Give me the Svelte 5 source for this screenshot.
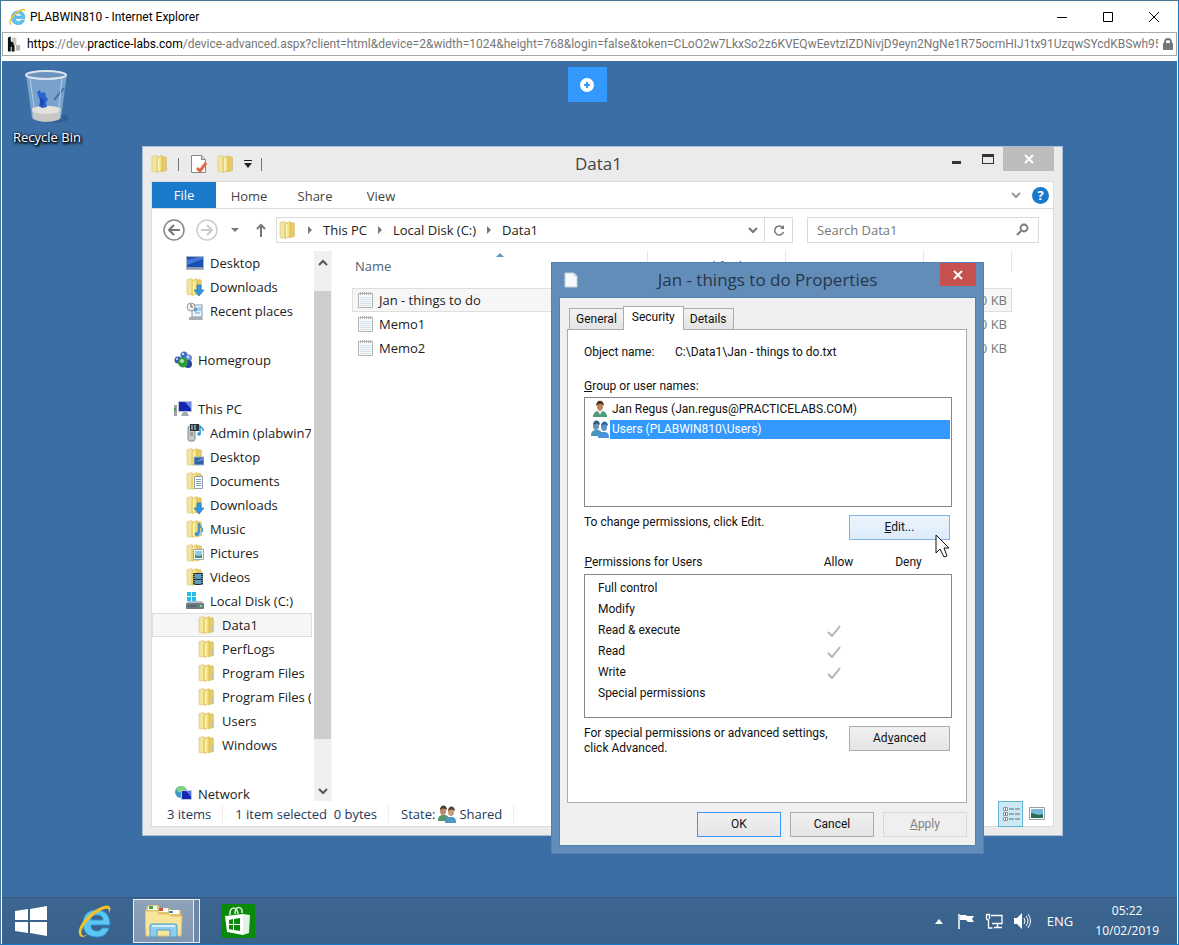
<script lang="ts">
	type NavItem = { icon: string; label: string; level: number };

	const navGroups: NavItem[][] = [
		[
			{ icon: 'desktop', label: 'Desktop', level: 1 },
			{ icon: 'downloads', label: 'Downloads', level: 1 },
			{ icon: 'recent', label: 'Recent places', level: 1 }
		],
		[{ icon: 'homegroup', label: 'Homegroup', level: 0 }],
		[
			{ icon: 'pc', label: 'This PC', level: 0 },
			{ icon: 'media', label: 'Admin (plabwin7)', level: 1 },
			{ icon: 'folder-desktop', label: 'Desktop', level: 1 },
			{ icon: 'documents', label: 'Documents', level: 1 },
			{ icon: 'downloads', label: 'Downloads', level: 1 },
			{ icon: 'music', label: 'Music', level: 1 },
			{ icon: 'pictures', label: 'Pictures', level: 1 },
			{ icon: 'videos', label: 'Videos', level: 1 },
			{ icon: 'disk', label: 'Local Disk (C:)', level: 1 },
			{ icon: 'folder', label: 'Data1', level: 2 },
			{ icon: 'folder', label: 'PerfLogs', level: 2 },
			{ icon: 'folder', label: 'Program Files', level: 2 },
			{ icon: 'folder', label: 'Program Files (x86)', level: 2 },
			{ icon: 'folder', label: 'Users', level: 2 },
			{ icon: 'folder', label: 'Windows', level: 2 }
		],
		[{ icon: 'network', label: 'Network', level: 0 }]
	];

	const crumbs = ['This PC', 'Local Disk (C:)', 'Data1'];
	const files = ['Jan - things to do', 'Memo1', 'Memo2'];

	const principals = [
		{ icon: 'user', label: 'Jan Regus (Jan.regus@PRACTICELABS.COM)' },
		{ icon: 'users', label: 'Users (PLABWIN810\\Users)' }
	];

	const permissions = [
		{ name: 'Full control', allow: false },
		{ name: 'Modify', allow: false },
		{ name: 'Read & execute', allow: true },
		{ name: 'Read', allow: true },
		{ name: 'Write', allow: true },
		{ name: 'Special permissions', allow: false }
	];

	let currentFolder = $state('Data1');
	let selectedFile = $state(0);
	let selectedPrincipal = $state(1);
	let query = $state('');
</script>

{#snippet folderBase()}
	<path d="M1 1.500l5-1 1 1v15l-5 .5-1-1z" fill="#f3e4a0" stroke="#dcc573" stroke-width=".6" />
	<path d="M10 2l4-.5 1.500 1v13l-5 1.500z" fill="#e6cb68" stroke="#d4b655" stroke-width=".5" />
	<path d="M6 3l5-2.500v15L6 17.500z" fill="#f4e07f" stroke="#cfb24e" stroke-width=".6" />
	<path d="M7 3.500l1.500-.8v13L7 16.500z" fill="#fbf3bf" />
	<path d="M14 10h1.500v5H14z" fill="#b9c7c4" />
{/snippet}

{#snippet icon(name: string)}
	<svg class="icon" viewBox="0 0 18 18" aria-hidden="true">
		{#if name === 'folder'}
			{@render folderBase()}
		{:else if name === 'desktop'}
			<rect x="0" y="2" width="18" height="14" fill="#aeb9c8" />
			<rect x="1" y="3" width="16" height="10" fill="#1c4fb4" />
			<path d="M1 11V6l11-3h5v2z" fill="#4378d6" />
			<path d="M1 14h16" stroke="#6c7c90" />
		{:else if name === 'downloads'}
			{@render folderBase()}
			<path d="M11 7h4v5h3l-5 6-5-6h3z" fill="#2f9ae0" stroke="#1769a8" stroke-width=".6" />
		{:else if name === 'recent'}
			<rect x="6" y="3" width="10" height="12" fill="#eef4fa" stroke="#8795a5" />
			<path d="M8 6h3v3H8zM12 6h3M12 8h3M9 11h5" fill="#5a9fd8" stroke="#5a9fd8" />
			<path d="M3 15h13l1 3H3z" fill="#a8adb3" />
			<circle cx="5" cy="5" r="4" fill="#eee" stroke="#999" />
			<path d="M5 2v3h2" fill="none" stroke="#666" />
		{:else if name === 'homegroup'}
			<circle cx="4" cy="9" r="3.500" fill="#3558b8" />
			<circle cx="10" cy="4" r="3.500" fill="#3f6cc8" />
			<circle cx="14.500" cy="7" r="3.500" fill="#6b8fdc" />
			<circle cx="14" cy="13" r="4" fill="#27459f" />
			<circle cx="9" cy="11.500" r="5" fill="#2f9a3c" />
			<circle cx="3" cy="8" r="1.200" fill="#b9ccf4" />
			<circle cx="9" cy="3" r="1.200" fill="#cfdcf8" />
			<circle cx="14" cy="6" r="1.200" fill="#dce6fb" />
			<circle cx="8" cy="10" r="2" fill="#b4e6a8" />
		{:else if name === 'pc'}
			<rect x="0" y="5" width="3" height="11" fill="#9aa3a8" />
			<rect x="0" y="8" width="2" height="3" fill="#53a455" />
			<rect x="4" y="1" width="14" height="11" fill="#bcc5d2" />
			<rect x="5" y="2" width="12" height="9" fill="#1426b0" />
			<path d="M11 2h6v7z" fill="#6884e4" />
			<path d="M9 12h4l2 4H7z" fill="#a2a9b1" />
		{:else if name === 'media'}
			<rect x="2" y="2" width="7" height="15" rx="2" fill="#c5cacd" stroke="#7f888d" />
			<path d="M4 9h3M4 11h3" stroke="#6f7578" />
			<rect x="4" y="0" width="9" height="7" fill="#28343c" />
			<path d="M6 1v5M9 1v5" stroke="#d9e9ee" />
			<path d="M14 10V2l3 3v2" fill="none" stroke="#279bd9" stroke-width="1.500" />
			<circle cx="13" cy="10" r="1.800" fill="#279bd9" />
		{:else if name === 'folder-desktop'}
			{@render folderBase()}
			<path d="M8 9h10v8H8z" fill="#2f5fa5" stroke="#a6b9d0" />
			<path d="M9 14l8-4v2z" fill="#77a5dd" />
		{:else if name === 'documents'}
			{@render folderBase()}
			<path d="M8.500 4.500h8v12h-8z" fill="#f9fbfc" stroke="#91a0ac" />
			<path d="M10 7.500h5M10 9.500h5M10 11.500h5M10 13.500h5" stroke="#7fa1bd" />
		{:else if name === 'music'}
			{@render folderBase()}
			<path d="M13 3v10" stroke="#1f7fc4" stroke-width="1.500" />
			<path d="M13 3c0 4 5 4 3 9" fill="none" stroke="#2f9ae0" stroke-width="1.500" />
			<ellipse cx="11" cy="14" rx="2.500" ry="2" fill="#2f9ae0" />
		{:else if name === 'pictures'}
			{@render folderBase()}
			<path d="M7.500 5.500h10v10h-10z" fill="#f7fafc" stroke="#93a8b9" />
			<path d="M9 7h7v7H9z" fill="#8fcbe6" />
			<path d="M9 14v-3l4 1 3-1v3z" fill="#51906c" />
		{:else if name === 'videos'}
			{@render folderBase()}
			<path d="M7 5h10v12H7z" fill="#233445" />
			<path d="M9 6h6v5H9zM9 12h6v4H9z" fill="#5c9fbd" />
			<path d="M8 6v11M16 6v11" stroke="#dbe5ea" stroke-dasharray="1 1" />
		{:else if name === 'disk'}
			<path d="M1 0h4v4H1zM6 0h4v4H6zM1 5h4v4H1zM6 5h4v4H6z" fill="#1fbef0" />
			<path d="M2 9h14l2 3H0z" fill="#b7c1c6" />
			<rect x="0" y="11" width="18" height="6" rx="1" fill="#6c7b84" />
			<path d="M2 14h9" stroke="#44535c" />
			<path d="M14 14h2" stroke="#76dd6d" stroke-width="2" />
		{:else if name === 'network'}
			<circle cx="7" cy="7" r="6" fill="#3e9ccc" />
			<path d="M2 4c3-4 8-4 10 0-3 1-4 4-8 3z" fill="#84cf82" />
			<rect x="7" y="5" width="11" height="10" fill="#c1cad6" />
			<rect x="8" y="6" width="9" height="8" fill="#1426b0" />
			<path d="M12 6h5v6z" fill="#5675dd" />
		{:else if name === 'note'}
			<path d="M1.500 2.500h14v14h-14z" fill="#f7f9fa" stroke="#b0b5b8" />
			<path d="M3 6.500h11M3 8.500h11M3 10.500h11M3 12.500h11M3 14.500h11" stroke="#d3e1ea" />
			<path d="M3.500 1v3M5.500 1v3M7.500 1v3M9.500 1v3M11.500 1v3M13.500 1v3" stroke="#9aa1a6" stroke-width=".7" />
		{:else if name === 'user'}
			<path d="M2 17c0-5 3-6 7-6s7 1 7 6z" fill="#4f9e78" />
			<path d="M7 11l2 4 2-4z" fill="#e9f4ee" />
			<ellipse cx="9" cy="6" rx="3" ry="5" fill="#bd8257" />
			<path d="M5 6c0-7 8-7 8 0-2-3-5-3-8 0z" fill="#4b3826" />
		{:else if name === 'users' || name === 'shared'}
			<path d="M0 16c0-5 2-6 6-6s5 2 5 6z" fill={name === 'users' ? '#4a94ba' : '#55976e'} />
			<path d="M7 18c0-6 2-6 6-6s5 2 5 6z" fill={name === 'users' ? '#4793d8' : '#4c98c2'} />
			<ellipse cx="5" cy="6" rx="3" ry="4" fill={name === 'users' ? '#6795b2' : '#bd8a65'} />
			<ellipse cx="13" cy="7" rx="3" ry="4" fill={name === 'users' ? '#5f93c4' : '#c99b78'} />
			<path d="M2 5c0-6 7-6 7 0-2-2-4-2-7 0z" fill={name === 'users' ? '#285a83' : '#4c3a2a'} />
			<path d="M10 6c0-6 7-6 7 0-2-2-4-2-7 0z" fill={name === 'users' ? '#2b689d' : '#593f2c'} />
		{/if}
	</svg>
{/snippet}

{#snippet ieLogo()}
	<svg class="ie" viewBox="0 0 34 34" aria-hidden="true">
		<path
			d="M32 21H13c0 4 2 6 6 6 3 0 4-1 5-3h7c-2 6-6 9-12 9C10 33 5 28 5 19.500S10 6 18.500 6 32 11 32 21zM25 16c0-3-2-5-6-5s-6 2-6 5z"
			fill="#5cc6f2"
			stroke="#2b93cf"
		/>
		<path
			d="M2 32c-4-5 2-15 10-22C20 3 30-1 32 3c1 2 0 4-1 6 0-3 0-5-4-4-5 1-12 6-17 12-5 5-8 11-6 14 1 1 3 1 6-1-3 3-6 4-8 2z"
			fill="#f2c12e"
		/>
	</svg>
{/snippet}

<div class="browser">
	<header class="browser-title">
		{@render ieLogo()}
		<span>PLABWIN810 - Internet Explorer</span>
		<div class="browser-controls">
			<button type="button" aria-label="Minimize">
				<svg viewBox="0 0 12 12"><path d="M1 6.500h10" /></svg>
			</button>
			<button type="button" aria-label="Maximize">
				<svg viewBox="0 0 12 12"><path d="M1.500 1.500h9v9h-9z" /></svg>
			</button>
			<button type="button" aria-label="Close">
				<svg viewBox="0 0 12 12"><path d="M1 1l10 10M11 1L1 11" /></svg>
			</button>
		</div>
	</header>

	<div class="url-bar">
		<svg class="favicon" viewBox="0 0 16 16" aria-hidden="true">
			<path d="M1 1l3-1v5l4 2v9H5v-5H4v5H1z" fill="#111" />
			<path d="M6 1h4v8H7V6L5 5V2z" fill="#c9c9c9" />
			<path d="M10 9h4v6h-5z" fill="#b5b5b5" />
		</svg>
		<span class="url"
			><b>https</b>://dev.<b>practice-labs.com</b
			>/device-advanced.aspx?client=html&amp;device=2&amp;width=1024&amp;height=768&amp;login=false&amp;token=CLoO2w7LkxSo2z6KVEQwEevtzIZDNivjD9eyn2NgNe1R75ocmHIJ1tx91UzqwSYcdKBSwh95C</span
		>
		<svg class="lock" viewBox="0 0 10 13" aria-hidden="true">
			<path d="M2 6V4c0-4 6-4 6 0v2" fill="none" stroke="#777" stroke-width="2" />
			<rect y="5" width="10" height="7" fill="#777" />
		</svg>
	</div>

	<main class="desktop">
		<div class="recycle">
			<svg viewBox="0 0 44 54" aria-hidden="true">
				<ellipse cx="27" cy="48" rx="17" ry="5" fill="#2d5788" opacity=".6" />
				<path d="M1 4h41l-6 44c-4 5-25 5-29 0z" fill="#8db4da" opacity=".75" />
				<path d="M7 38c6-3 23-3 29 0l-1 10c-4 5-23 5-27 0z" fill="#c9c7c4" />
				<ellipse cx="21" cy="40" rx="14" ry="4" fill="#e4e1dd" />
				<path d="M12 22l3-2 1 3 4-1 1 5 2 2-2 4 1 4-5 1-3-2 1-5z" fill="#2a63cf" />
				<path d="M15 28l3 1 1 5-3 3z" fill="#1745b4" />
				<path d="M29 30l10-12" stroke="#4a74a4" stroke-width="2" />
				<path d="M5 8l5 36M37 8l-4 36" stroke="#c3d9ee" stroke-width="1" opacity=".8" />
				<ellipse cx="21" cy="5" rx="20" ry="4" fill="#6a93be" stroke="#dde6ee" stroke-width="2" />
			</svg>
			<span>Recycle Bin</span>
		</div>

		<button type="button" class="toolbar-handle" aria-label="Open toolbar">
			<svg viewBox="0 0 14 14"><circle cx="7" cy="7" r="7" fill="#fff" /><path d="M7 4v6M4 7h6" stroke="#39f" stroke-width="2" /></svg>
		</button>

		<section class="explorer" aria-label="Data1">
			<header class="explorer-title">
				<div class="quick">
					{@render icon('folder')}
					<i class="bar"></i>
					<svg class="check-page" viewBox="0 0 18 20" aria-hidden="true">
						<path d="M1.500 1.500h10l4 4v13h-14z" fill="#fff" stroke="#888" />
						<path d="M11.500 1.500v4h4" fill="#ccc" stroke="#888" />
						<path d="M7 14l3 3 6-8" fill="none" stroke="#e0694a" stroke-width="3" />
					</svg>
					{@render icon('folder')}
					<svg class="customize" viewBox="0 0 8 8" aria-hidden="true"><path d="M0 0h8v1H0zM0 3h8L4 8z" fill="#222" /></svg>
					<i class="bar"></i>
				</div>
				<h1>Data1</h1>
				<div class="explorer-controls">
					<button type="button" aria-label="Minimize"><svg viewBox="0 0 12 12"><path d="M1 8h9v3H1z" fill="#333" /></svg></button>
					<button type="button" aria-label="Maximize"><svg viewBox="0 0 12 12"><path d="M0 1h12v10H0zM1 4v6h10V4z" fill="#333" fill-rule="evenodd" /></svg></button>
					<button type="button" class="close" aria-label="Close"><svg viewBox="0 0 12 12"><path d="M2 2l8 8M10 2l-8 8" stroke="#fff" stroke-width="2" /></svg></button>
				</div>
			</header>

			<div class="explorer-body">
				<div class="ribbon">
					<button type="button" class="file">File</button>
					<button type="button">Home</button>
					<button type="button">Share</button>
					<button type="button">View</button>
					<div class="ribbon-end">
						<svg class="chevron" viewBox="0 0 10 8"><path d="M1 2l4 4 4-4" fill="none" stroke="#999" stroke-width="2" /></svg>
						<button type="button" class="help" aria-label="Help">?</button>
					</div>
				</div>

				<div class="nav-row">
					<button type="button" class="round" aria-label="Back"><svg viewBox="0 0 22 22"><circle cx="11" cy="11" r="10" fill="none" stroke="#888" stroke-width="1.500" /><path d="M17 11H6M11 6l-5 5 5 5" fill="none" stroke="#777" stroke-width="2" /></svg></button>
					<button type="button" class="round" aria-label="Forward"><svg viewBox="0 0 22 22"><circle cx="11" cy="11" r="10" fill="none" stroke="#ccc" stroke-width="1.500" /><path d="M5 11h11M11 6l5 5-5 5" fill="none" stroke="#ccc" stroke-width="2" /></svg></button>
					<svg class="history" viewBox="0 0 8 8" aria-hidden="true"><path d="M0 2h8L4 6z" fill="#777" /></svg>
					<button type="button" class="up" aria-label="Up"><svg viewBox="0 0 12 14"><path d="M6 14V2M2 6l4-4 4 4" fill="none" stroke="#777" stroke-width="2" /></svg></button>
					<nav class="address">
						{@render icon('folder')}
						{#each crumbs as crumb (crumb)}
							<svg class="sep" viewBox="0 0 6 8" aria-hidden="true"><path d="M1 0l4 4-4 4z" fill="#777" /></svg>
							<button type="button">{crumb}</button>
						{/each}
						<svg class="chevron drop" viewBox="0 0 10 8"><path d="M1 2l4 4 4-4" fill="none" stroke="#777" stroke-width="2" /></svg>
						<button type="button" class="refresh" aria-label="Refresh">
							<svg viewBox="0 0 14 14"><path d="M11 5a4.500 4.500 0 1 0 .5 4" fill="none" stroke="#777" stroke-width="1.500" /><path d="M8 6h4V2z" fill="#777" /></svg>
						</button>
					</nav>
					<label class="search">
						<input type="text" placeholder="Search Data1" aria-label="Search Data1" bind:value={query} />
						<svg viewBox="0 0 14 14" aria-hidden="true"><circle cx="9" cy="5" r="3.500" fill="none" stroke="#777" stroke-width="1.800" /><path d="M6 8l-4 4" stroke="#777" stroke-width="2" /></svg>
					</label>
				</div>

				<div class="panes">
					<div class="tree">
						{#each navGroups as group, g (g)}
							<ul>
								{#each group as item (item.label)}
									<li>
										<button
											type="button"
											class="level-{item.level}"
											class:current={item.label === currentFolder}
											onclick={() => (currentFolder = item.label)}
										>
											{@render icon(item.icon)}
											<span>{item.label}</span>
										</button>
									</li>
								{/each}
							</ul>
						{/each}
					</div>
					<div class="scrollbar" aria-hidden="true">
						<svg viewBox="0 0 10 8"><path d="M1 6l4-4 4 4" fill="none" stroke="#555" stroke-width="2" /></svg>
						<div class="thumb"></div>
						<svg viewBox="0 0 10 8"><path d="M1 2l4 4 4-4" fill="none" stroke="#555" stroke-width="2" /></svg>
					</div>
					<div class="content">
						<table>
							<thead>
								<tr>
									<th class="name">Name <svg class="sort" viewBox="0 0 8 4"><path d="M0 4l4-4 4 4z" fill="#5b9cc4" /></svg></th>
									<th>Date modified</th>
									<th>Type</th>
									<th class="size-head">Size</th>
								</tr>
							</thead>
							<tbody>
								{#each files as file, i (file)}
									<tr class:selected={selectedFile === i} onclick={() => (selectedFile = i)}>
										<td><div class="file-name">{@render icon('note')}{file}</div></td>
										<td></td>
										<td></td>
										<td class="size">0 KB</td>
									</tr>
								{/each}
							</tbody>
						</table>
					</div>
				</div>

				<footer class="status">
					<span class="cell">3 items</span>
					<span class="cell">1 item selected&nbsp; 0 bytes</span>
					<span class="cell">State:{@render icon('shared')} Shared</span>
					<div class="views">
						<button type="button" class="active" aria-label="Details view">
							<svg viewBox="0 0 18 16">
								<path d="M1.500 1.500h4v3h-4zM1.500 6.500h4v3h-4zM1.500 11.500h4v3h-4z" fill="#fff" stroke="#8b96a0" />
								<path d="M7 3h5M13 3h5M7 8h5M13 8h5M7 13h5M13 13h5" stroke="#5f6e7a" />
								<path d="M3.500 2v2M3.500 12v2" stroke="#3fa65a" />
								<path d="M3.500 7v2" stroke="#d04545" />
							</svg>
						</button>
						<button type="button" aria-label="Thumbnail view">
							<svg viewBox="0 0 18 16">
								<path d="M1.500 1.500h15v12h-15z" fill="#fff" stroke="#8fa0ae" />
								<path d="M3 3h12v9H3z" fill="#7ab7df" />
								<path d="M3 12V7c3 0 6 3 12 1v4z" fill="#2b6a55" />
							</svg>
						</button>
					</div>
				</footer>
			</div>
		</section>

		<div class="dialog" role="dialog" aria-labelledby="props-title">
			<header>
				<svg class="dialog-icon" viewBox="0 0 14 16" aria-hidden="true"><path d="M1 1h9l3 3v11H1z" fill="#f7fafc" stroke="#c3d0dc" /><path d="M10 1v3h3" fill="none" stroke="#c3d0dc" /></svg>
				<h2 id="props-title">Jan - things to do Properties</h2>
				<button type="button" class="dialog-close" aria-label="Close"><svg viewBox="0 0 12 12"><path d="M2 2l8 8M10 2l-8 8" stroke="#fff" stroke-width="2" /></svg></button>
			</header>

			<div class="dialog-body">
				<div class="tabs" role="tablist">
					<button type="button" role="tab" aria-selected="false">General</button>
					<button type="button" role="tab" aria-selected="true" class="selected">Security</button>
					<button type="button" role="tab" aria-selected="false">Details</button>
				</div>

				<div class="panel">
					<p class="object"><span>Object name:</span><span>C:\Data1\Jan - things to do.txt</span></p>

					<p class="group-label" id="group-label"><u>G</u>roup or user names:</p>
					<div class="principals" role="listbox" aria-labelledby="group-label">
						{#each principals as p, i (p.label)}
							<button
								type="button"
								role="option"
								aria-selected={selectedPrincipal === i}
								class:selected={selectedPrincipal === i}
								onclick={() => (selectedPrincipal = i)}
							>
								{@render icon(p.icon)}
								<span>{p.label}</span>
							</button>
						{/each}
					</div>

					<div class="action">
						<p>To change permissions, click Edit.</p>
						<button type="button" class="btn hot"><u>E</u>dit...</button>
					</div>

					<table class="permissions">
						<thead>
							<tr><th><u>P</u>ermissions for Users</th><th>Allow</th><th>Deny</th></tr>
						</thead>
						<tbody>
							{#each permissions as perm (perm.name)}
								<tr>
									<td>{perm.name}</td>
									<td class="mark">
										{#if perm.allow}
											<svg viewBox="0 0 14 12" role="img" aria-label="Allowed"><path d="M1 7l4 4 8-10" fill="none" stroke="#b4b4b4" stroke-width="2" /></svg>
										{/if}
									</td>
									<td></td>
								</tr>
							{/each}
						</tbody>
					</table>

					<div class="action">
						<p>For special permissions or advanced settings, click Advanced.</p>
						<button type="button" class="btn">Ad<u>v</u>anced</button>
					</div>
				</div>

				<div class="dialog-buttons">
					<button type="button" class="btn default">OK</button>
					<button type="button" class="btn">Cancel</button>
					<button type="button" class="btn" disabled><u>A</u>pply</button>
				</div>
			</div>
		</div>

		<svg class="pointer" viewBox="0 0 15 24" aria-hidden="true">
			<path d="M1 1v18l4-4 4 8 3-1-3-8h5z" fill="#fff" stroke="#111" />
		</svg>
	</main>

	<footer class="taskbar">
		<button type="button" class="task-start" aria-label="Start">
			<svg class="start" viewBox="0 0 32 30"><path d="M0 5l13-2v11H0zM15 3l17-3v14H15zM0 16h13v11L0 25zM15 16h17v14l-17-3z" fill="#fff" /></svg>
		</button>
		<button type="button" class="task-ie" aria-label="Internet Explorer">{@render ieLogo()}</button>
		<button type="button" class="running" aria-label="File Explorer">
			<svg viewBox="0 0 38 34">
				<path d="M1 4l3-3h9l2 3h9l2 2h10v24H1z" fill="#e2c46c" />
				<path d="M3 2h9v4H3zM14 4h9v4h-9zM24 6h10v4H24z" fill="#fff" />
				<path d="M4 2h4v3H4z" fill="#3da93b" />
				<path d="M14 4h4v3h-4z" fill="#d3562f" />
				<path d="M24 7h4v2h-4z" fill="#2d8bd0" />
				<path d="M0 7h12l2 3h10l2 2h11l-1 20H1z" fill="#f7e59c" stroke="#dfc36b" />
				<path d="M5 33V22q0-2 2-2h23q2 0 2 2v11h-7v-7H12v7z" fill="#8fcdee" stroke="#4c9fcb" />
				<path d="M7 22h23" stroke="#d5f0fb" stroke-width="2" />
			</svg>
		</button>
		<button type="button" aria-label="Store">
			<svg class="store" viewBox="0 0 34 34">
				<rect width="34" height="34" fill="#0a8a0a" />
				<path d="M9 11c-1-9 7-9 8-1M14 10c0-9 8-8 7-1" fill="none" stroke="#d8efd8" stroke-width="1.500" />
				<path d="M4 12l18-2v21L6 28z" fill="#fff" />
				<path d="M22 10l7 1-1 18-6 2z" fill="#e3f2e3" />
				<path d="M8 16l4-1v5H8zM13 15l6-1v6h-6zM8 21h4v5l-4-1zM13 21h6v6l-6-1z" fill="#0a8a0a" />
			</svg>
		</button>

		<div class="tray">
			<svg class="more" viewBox="0 0 8 5"><path d="M0 5l4-5 4 5z" fill="#fff" /></svg>
			<svg class="tray-icon" viewBox="0 0 18 18"><path d="M2 2v15" stroke="#fff" stroke-width="1.500" /><path d="M3 3h6l1 1h7l-2 3 2 3h-6l-2-2H3z" fill="#fff" /></svg>
			<svg class="tray-icon" viewBox="0 0 18 18"><path d="M6 3.500h11v8H7M9 15.500h8M12.500 12v4M1.500 2v4q0 2 2 2v8h4M1.500 2.500h3V7" fill="none" stroke="#fff" stroke-width="1.300" /></svg>
			<svg class="tray-icon" viewBox="0 0 18 18"><path d="M1 6h3l5-5v16l-5-5H1z" fill="#fff" /><path d="M11 6q2 3 0 6M13 4q4 5 0 10M15 2q5 7 0 14" fill="none" stroke="#fff" /></svg>
			<span class="lang">ENG</span>
			<div class="clock"><span>05:22</span><span>10/02/2019</span></div>
		</div>
	</footer>
</div>

<style>
	:global(body) {
		margin: 0;
	}
	.browser {
		box-sizing: border-box;
		display: flex;
		flex-direction: column;
		height: 100vh;
		min-height: 900px;
		padding: 0 1px;
		overflow: hidden;
		background: #fff;
		border: 1px solid #1878c8;
		border-top-color: #457795;
		border-left-color: #457795;
		font-family: 'Open Sans', 'Noto Sans', sans-serif;
		font-size: 13px;
		color: #222;
	}
	button {
		padding: 0;
		border: 0;
		background: none;
		font: inherit;
		color: inherit;
	}
	h1,
	h2,
	p,
	ul {
		margin: 0;
		padding: 0;
		font-weight: 400;
		list-style: none;
	}
	svg {
		flex: none;
		display: block;
	}
	.icon {
		width: 18px;
		height: 18px;
	}

	/* browser chrome */
	.browser-title {
		display: flex;
		align-items: center;
		gap: 4px;
		height: 31px;
		padding-left: 7px;
		font-family: Roboto, 'Liberation Sans', sans-serif;
		font-size: 12px;
		color: #000;
	}
	.browser-title .ie {
		width: 17px;
		height: 17px;
	}
	.browser-controls {
		display: flex;
		margin-left: auto;
	}
	.browser-controls button {
		display: grid;
		place-items: center;
		width: 46px;
		height: 28px;
	}
	.browser-controls svg {
		width: 12px;
		height: 12px;
		fill: none;
		stroke: #000;
	}
	.url-bar {
		box-sizing: border-box;
		display: flex;
		align-items: center;
		gap: 5px;
		height: 24px;
		margin-bottom: 5px;
		padding: 0 3px 0 4px;
		border: 1px solid #aaa;
		font-family: Roboto, 'Liberation Sans', sans-serif;
		font-size: 12px;
		color: #777;
	}
	.favicon {
		width: 15px;
		height: 16px;
	}
	.url {
		flex: 1;
		overflow: hidden;
		white-space: nowrap;
	}
	.url b {
		font-weight: 400;
		color: #000;
	}
	.lock {
		width: 10px;
		height: 13px;
	}

	/* desktop */
	.desktop {
		position: relative;
		flex: 1;
		overflow: hidden;
		background: #3b6ea5;
	}
	.recycle {
		display: flex;
		flex-direction: column;
		align-items: center;
		gap: 4px;
		width: 90px;
		padding-top: 9px;
		color: #fff;
		line-height: 18px;
		text-shadow: 1px 1px 2px #000, 0 0 3px #000, 1px 2px 3px #000;
	}
	.recycle svg {
		width: 44px;
		height: 54px;
	}
	.toolbar-handle {
		position: absolute;
		top: 6px;
		left: 50%;
		display: grid;
		place-items: center;
		width: 39px;
		height: 35px;
		margin-left: -22px;
		background: #39f;
	}
	.toolbar-handle svg {
		width: 14px;
		height: 14px;
	}

	/* explorer window */
	.explorer {
		position: absolute;
		left: 140px;
		top: 85px;
		box-sizing: border-box;
		display: flex;
		flex-direction: column;
		width: 921px;
		height: 690px;
		padding: 0 8px 8px;
		background: #ebebeb;
		border: 1px solid #a9bfd8;
	}
	.explorer-title {
		display: grid;
		grid-template-columns: 1fr auto 1fr;
		height: 34px;
	}
	.quick {
		display: flex;
		align-items: center;
		gap: 9px;
	}
	.quick .bar {
		width: 1px;
		height: 13px;
		background: #777;
	}
	.check-page {
		width: 18px;
		height: 20px;
		margin-left: 2px;
	}
	.customize {
		width: 8px;
		height: 8px;
	}
	h1 {
		margin-right: 8px;
		font-size: 17px;
		line-height: 34px;
		color: #444;
	}
	.explorer-controls {
		display: flex;
		justify-content: flex-end;
	}
	.explorer-controls button {
		display: grid;
		place-items: center;
		width: 31px;
		height: 24px;
	}
	.explorer-controls .close {
		width: 51px;
		background: #bcbcbc;
	}
	.explorer-controls svg,
	.dialog-close svg {
		width: 12px;
		height: 12px;
	}
	.explorer-body {
		flex: 1;
		display: flex;
		flex-direction: column;
		min-height: 0;
		background: #fff;
		border: 1px solid #dcdcdc;
	}
	.ribbon {
		display: flex;
		height: 26px;
		border-bottom: 1px solid #dcdcdc;
		color: #444;
	}
	.ribbon > button {
		width: 66px;
		padding-top: 2px;
	}
	.ribbon > .file {
		width: 64px;
		padding: 0;
		background: #1979ca;
		color: #fff;
	}
	.ribbon-end {
		display: flex;
		align-items: center;
		gap: 11px;
		margin-left: auto;
		padding-right: 4px;
	}
	.chevron {
		width: 10px;
		height: 8px;
	}
	.help {
		width: 17px;
		height: 17px;
		border-radius: 50%;
		background: #1979ca;
		color: #fff;
		font-weight: 700;
		line-height: 17px;
	}
	.nav-row {
		display: flex;
		align-items: center;
		height: 42px;
		padding: 0 14px 0 11px;
	}
	.round,
	.round svg {
		width: 22px;
		height: 22px;
	}
	.round {
		margin-right: 11px;
	}
	.history {
		width: 8px;
		height: 8px;
		margin: 0 16px 0 2px;
	}
	.up svg {
		width: 12px;
		height: 14px;
	}
	.address {
		box-sizing: border-box;
		flex: 1;
		display: flex;
		align-items: center;
		gap: 10px;
		height: 26px;
		margin: 0 14px 0 9px;
		padding-left: 2px;
		border: 1px solid #dadada;
	}
	.address .sep {
		width: 6px;
		height: 8px;
	}
	.address .drop {
		margin-left: auto;
	}
	.address .refresh {
		display: grid;
		place-items: center;
		width: 28px;
		height: 24px;
		margin-left: -4px;
		border-left: 1px solid #dadada;
	}
	.refresh svg,
	.search svg {
		width: 14px;
		height: 14px;
	}
	.search {
		box-sizing: border-box;
		display: flex;
		align-items: center;
		width: 232px;
		height: 26px;
		padding: 0 9px;
		border: 1px solid #dadada;
	}
	.search input {
		flex: 1;
		min-width: 0;
		padding: 0;
		border: 0;
		outline: 0;
		background: none;
		font: inherit;
	}
	.search input::placeholder {
		color: #777;
	}
	.panes {
		flex: 1;
		display: flex;
		min-height: 0;
		overflow: hidden;
	}
	.tree {
		box-sizing: border-box;
		width: 162px;
		padding-right: 2px;
		overflow: hidden;
	}
	.tree ul + ul {
		margin-top: 25px;
	}
	.tree button {
		box-sizing: border-box;
		display: flex;
		align-items: center;
		gap: 6px;
		width: 100%;
		height: 24px;
		border: 1px solid transparent;
		white-space: nowrap;
		overflow: hidden;
	}
	.tree .level-0 {
		padding-left: 21px;
	}
	.tree .level-1 {
		padding-left: 33px;
	}
	.tree .level-2 {
		padding-left: 45px;
	}
	.tree .level-2.current {
		background: #f6f6f6;
		border-color: #dedede;
	}
	.scrollbar {
		display: flex;
		flex-direction: column;
		align-items: center;
		justify-content: space-between;
		width: 17px;
		padding: 8px 0 6px;
		background: #f0f0f0;
		border-right: 1px solid #f6f6f6;
	}
	.scrollbar svg {
		width: 10px;
		height: 8px;
	}
	.thumb {
		flex: 1;
		width: 17px;
		margin: 24px 0 48px;
		background: #cdcdcd;
	}
	.content {
		flex: 1;
		padding: 0 41px 0 20px;
	}
	.content table {
		width: 100%;
		table-layout: fixed;
		border-collapse: collapse;
	}
	.content th {
		position: relative;
		width: 138px;
		height: 29px;
		box-sizing: border-box;
		padding: 0 0 0 8px;
		font-weight: 400;
		text-align: left;
		color: #4c607a;
		background: linear-gradient(#e5e5e5, #e5e5e5) right top / 1px 20px no-repeat;
	}
	.content .name {
		width: auto;
		padding-left: 3px;
	}
	.content .size-head {
		width: 88px;
	}
	.sort {
		position: absolute;
		top: 2px;
		left: 50%;
		width: 8px;
		height: 4px;
		margin-left: -4px;
	}
	.content thead::after {
		content: '';
		display: block;
		height: 8px;
	}
	.content td {
		height: 24px;
		padding: 0;
	}
	.content tr.selected {
		background: #f6f6f6;
		outline: 1px solid #dedede;
		outline-offset: -1px;
	}
	.file-name {
		display: flex;
		align-items: center;
		gap: 4px;
		padding-left: 5px;
	}
	.content .size {
		padding-right: 5px;
		text-align: right;
		color: #777;
	}
	.status {
		display: flex;
		align-items: center;
		height: 25px;
		padding-left: 3px;
		color: #1e395b;
	}
	.status .cell {
		display: flex;
		align-items: center;
		gap: 3px;
		padding: 0 11px 0 12px;
		border-right: 1px solid #eee;
	}
	.views {
		display: flex;
		align-items: center;
		gap: 1px;
		margin-left: auto;
		padding-right: 4px;
	}
	.views button {
		box-sizing: border-box;
		display: grid;
		place-items: center;
		width: 25px;
		height: 26px;
	}
	.views .active {
		background: #cbe8f3;
		border: 1px solid #5fb4d8;
	}
	.views svg {
		width: 18px;
		height: 16px;
	}

	/* properties dialog */
	.dialog {
		position: absolute;
		left: 549px;
		top: 201px;
		box-sizing: border-box;
		display: flex;
		flex-direction: column;
		width: 433px;
		height: 592px;
		padding: 0 7px 7px;
		background: #628db9;
		border: 1px solid #5381b2;
		font-family: Roboto, 'Liberation Sans', sans-serif;
		font-size: 12px;
		line-height: 15px;
		color: #111;
	}
	.dialog header {
		display: grid;
		grid-template-columns: 36px 1fr 36px;
		align-items: start;
		height: 34px;
	}
	.dialog-icon {
		width: 14px;
		height: 16px;
		margin: 9px 0 0 5px;
	}
	h2 {
		font-family: 'Open Sans', 'Noto Sans', sans-serif;
		font-size: 17px;
		line-height: 34px;
		text-align: center;
		color: #26374b;
	}
	.dialog-close {
		display: grid;
		place-items: center;
		height: 23px;
		background: #c75050;
	}
	.dialog-body {
		flex: 1;
		display: flex;
		flex-direction: column;
		padding: 8px 8px 8px 7px;
		background: #f0f0f0;
		border: 1px solid #5381b2;
	}
	.tabs {
		display: flex;
		align-items: flex-end;
		padding-left: 2px;
	}
	.tabs button {
		height: 21px;
		padding: 0 6px;
		background: linear-gradient(#f2f2f2, #e4e4e4);
		border: 1px solid #acacac;
		border-bottom: 0;
	}
	.tabs .selected {
		position: relative;
		height: 24px;
		margin: 0 -1px -1px;
		padding: 0 8px 3px;
		background: #fff;
	}
	.panel {
		flex: 1;
		padding: 15px 14px 0 16px;
		background: #fff;
		border: 1px solid #acacac;
	}
	.object {
		display: flex;
	}
	.object span:first-child {
		width: 91px;
	}
	.group-label {
		margin: 19px 0 3px;
	}
	.principals {
		box-sizing: border-box;
		height: 110px;
		padding: 1px;
		border: 1px solid #828790;
	}
	.principals button {
		display: flex;
		align-items: center;
		width: 100%;
		height: 20px;
		padding-left: 5px;
		gap: 1px;
		text-align: left;
	}
	.principals span {
		flex: 1;
		padding-left: 2px;
		line-height: 19px;
	}
	.principals .selected span {
		background: #39f;
		color: #fff;
	}
	.action {
		display: flex;
		justify-content: space-between;
		margin: 8px 2px 0 0;
	}
	.action p {
		max-width: 255px;
	}
	.btn {
		box-sizing: border-box;
		width: 84px;
		height: 25px;
		border: 1px solid #acacac;
		background: linear-gradient(#f0f0f0, #e5e5e5);
	}
	.action .btn {
		width: 101px;
	}
	.btn.hot {
		border-color: #7eb4ea;
		background: linear-gradient(#ecf4fc, #dcecfc);
	}
	.btn.default {
		border-color: #3399ff;
	}
	.btn:disabled {
		border-color: #d9d9d9;
		background: #efefef;
		color: #838383;
	}
	.permissions {
		width: 100%;
		margin-top: 14px;
		border-collapse: collapse;
	}
	.permissions th {
		width: 70px;
		height: 17px;
		padding: 0 0 3px;
		font-weight: 400;
	}
	.permissions th:first-child {
		width: auto;
		text-align: left;
	}
	.permissions th:last-child {
		padding-right: 8px;
	}
	.permissions tbody {
		border: 1px solid #828790;
	}
	.permissions td {
		height: 21px;
		padding: 0;
	}
	.permissions td:first-child {
		padding-left: 13px;
	}
	.permissions tr:first-child td {
		padding-top: 3px;
	}
	.permissions tr:last-child td {
		padding-bottom: 13px;
	}
	.mark svg {
		width: 14px;
		height: 12px;
		margin-left: 23px;
	}
	.dialog-buttons {
		display: flex;
		justify-content: flex-end;
		gap: 9px;
		padding-top: 9px;
	}
	.pointer {
		position: absolute;
		left: 933px;
		top: 473px;
		width: 15px;
		height: 24px;
	}

	/* taskbar */
	.taskbar {
		display: flex;
		align-items: center;
		height: 46px;
		background: linear-gradient(#3c6590, #38618c);
		border-top: 1px solid #34587f;
		color: #fff;
	}
	.taskbar > button {
		display: grid;
		place-items: center;
		width: 62px;
		height: 46px;
	}
	.taskbar > .task-start {
		width: 58px;
	}
	.taskbar .start {
		width: 32px;
		height: 30px;
	}
	.taskbar > .task-ie {
		width: 70px;
		margin-right: 3px;
	}
	.task-ie .ie {
		width: 34px;
		height: 34px;
	}
	.taskbar .running {
		box-sizing: border-box;
		width: 67px;
		height: 44px;
		margin-right: 7px;
		padding-right: 6px;
		background: linear-gradient(#8ea2b9, #8196b0);
		border: 1px solid #e4ebf2;
		box-shadow: inset -5px 0 #6f88a5, inset -6px 0 #e4ebf2;
	}
	.running svg {
		width: 38px;
		height: 34px;
	}
	.store {
		width: 34px;
		height: 34px;
	}
	.tray {
		display: flex;
		align-items: center;
		gap: 10px;
		margin-left: auto;
		padding-right: 18px;
	}
	.more {
		width: 8px;
		height: 5px;
		margin-right: 4px;
	}
	.tray-icon {
		width: 18px;
		height: 18px;
	}
	.lang {
		margin: 0 12px 0 6px;
	}
	.clock {
		display: flex;
		flex-direction: column;
		align-items: center;
		font-size: 12px;
		line-height: 20px;
	}
</style>
